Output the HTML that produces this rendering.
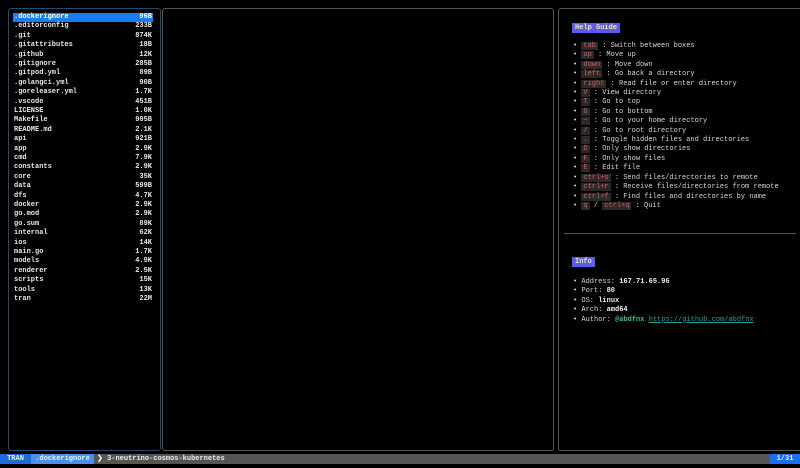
<!DOCTYPE html>
<html><head><meta charset="utf-8"><style>
*{margin:0;padding:0;box-sizing:border-box}
body{width:800px;height:468px;background:#000;overflow:hidden;position:relative;font-family:"Liberation Mono",monospace;font-size:7px;color:#ddd}
.box{position:absolute;border:1px solid #555;border-radius:3px}
.row{position:absolute;left:13px;width:140px;height:9.4px;line-height:9.4px;font-weight:bold;color:#e8e8e8;padding:0 1px}
.row span{float:right}
.sel{background:#1a7cf0;color:#fff}
.help{position:absolute;left:573px;line-height:9.4px;color:#d8d8d8;white-space:pre}
.k{background:#2a2a2a;color:#e05a5a;padding:0 2px}
.badge{position:absolute;background:#5b5bf0;color:#f2e98a;font-weight:bold;padding:0 3px;height:10px;line-height:10px}
b{color:#eee}
.sb{position:absolute;top:0;height:10px;line-height:10px}
</style></head><body>
<div class="box" style="left:8px;top:8px;width:153px;height:443px;border-color:#234a6e"></div>
<div class="box" style="left:162px;top:8px;width:392px;height:443px"></div>
<div class="box" style="left:558px;top:8px;width:250px;height:443px"></div>
<div style="position:absolute;left:564px;top:233px;width:232px;height:1px;background:#555"></div>

<div class="row sel" style="top:13px">.dockerignore<span>96B</span></div>
<div class="row" style="top:22.4px">.editorconfig<span>233B</span></div>
<div class="row" style="top:31.8px">.git<span>874K</span></div>
<div class="row" style="top:41.2px">.gitattributes<span>18B</span></div>
<div class="row" style="top:50.6px">.github<span>12K</span></div>
<div class="row" style="top:60px">.gitignore<span>285B</span></div>
<div class="row" style="top:69.4px">.gitpod.yml<span>89B</span></div>
<div class="row" style="top:78.8px">.golangci.yml<span>90B</span></div>
<div class="row" style="top:88.2px">.goreleaser.yml<span>1.7K</span></div>
<div class="row" style="top:97.6px">.vscode<span>451B</span></div>
<div class="row" style="top:107px">LICENSE<span>1.0K</span></div>
<div class="row" style="top:116.4px">Makefile<span>905B</span></div>
<div class="row" style="top:125.8px">README.md<span>2.1K</span></div>
<div class="row" style="top:135.2px">api<span>921B</span></div>
<div class="row" style="top:144.6px">app<span>2.9K</span></div>
<div class="row" style="top:154px">cmd<span>7.9K</span></div>
<div class="row" style="top:163.4px">constants<span>2.9K</span></div>
<div class="row" style="top:172.8px">core<span>35K</span></div>
<div class="row" style="top:182.2px">data<span>599B</span></div>
<div class="row" style="top:191.6px">dfs<span>4.7K</span></div>
<div class="row" style="top:201px">docker<span>2.9K</span></div>
<div class="row" style="top:210.4px">go.mod<span>2.9K</span></div>
<div class="row" style="top:219.8px">go.sum<span>89K</span></div>
<div class="row" style="top:229.2px">internal<span>62K</span></div>
<div class="row" style="top:238.6px">ios<span>14K</span></div>
<div class="row" style="top:248px">main.go<span>1.7K</span></div>
<div class="row" style="top:257.4px">models<span>4.9K</span></div>
<div class="row" style="top:266.8px">renderer<span>2.5K</span></div>
<div class="row" style="top:276.2px">scripts<span>15K</span></div>
<div class="row" style="top:285.6px">tools<span>13K</span></div>
<div class="row" style="top:295px">tran<span>22M</span></div>

<div class="badge" style="left:572px;top:23px">Help Guide</div>
<div class="help" style="top:42px">• <span class="k">tab</span> : Switch between boxes
• <span class="k">up</span> : Move up
• <span class="k">down</span> : Move down
• <span class="k">left</span> : Go back a directory
• <span class="k">right</span> : Read file or enter directory
• <span class="k">V</span> : View directory
• <span class="k">T</span> : Go to top
• <span class="k">G</span> : Go to bottom
• <span class="k">~</span> : Go to your home directory
• <span class="k">/</span> : Go to root directory
• <span class="k">.</span> : Toggle hidden files and directories
• <span class="k">D</span> : Only show directories
• <span class="k">F</span> : Only show files
• <span class="k">E</span> : Edit file
• <span class="k">ctrl+s</span> : Send files/directories to remote
• <span class="k">ctrl+r</span> : Receive files/directories from remote
• <span class="k">ctrl+f</span> : Find files and directories by name
• <span class="k">q</span> / <span class="k">ctrl+q</span> : Quit</div>

<div class="badge" style="left:572px;top:257px">Info</div>
<div class="help" style="top:278px">• Address: <b>167.71.65.96</b>
• Port: <b>80</b>
• OS: <b>linux</b>
• Arch: <b>amd64</b>
• Author: <b style="color:#2ec27e">@abdfnx</b> <span style="color:#1aa39a;text-decoration:underline">https://github.com/abdfnx</span></div>

<div style="position:absolute;left:0;top:454px;width:800px;height:10px;background:#555;font-weight:bold;color:#eee"><span class="sb" style="left:0;width:31px;background:#1d6ad8;text-align:center">TRAN</span><span class="sb" style="left:31px;width:63px;background:#4a8fe8;text-align:center">.dockerignore</span><span class="sb" style="left:97px">❯ 3-neutrino-cosmos-kubernetes</span><span class="sb" style="right:0;width:30px;background:#1a6ef0;text-align:center">1/31</span></div>
</body></html>
